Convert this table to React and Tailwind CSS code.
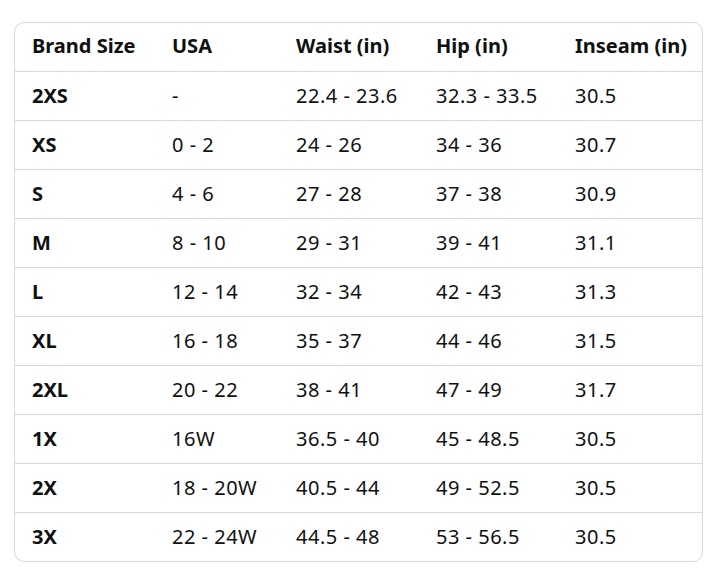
import React from 'react';

const headers = ['Brand Size', 'USA', 'Waist (in)', 'Hip (in)', 'Inseam (in)'];

const rows = [
    ['2XS', '-', '22.4 - 23.6', '32.3 - 33.5', '30.5'],
    ['XS', '0 - 2', '24 - 26', '34 - 36', '30.7'],
    ['S', '4 - 6', '27 - 28', '37 - 38', '30.9'],
    ['M', '8 - 10', '29 - 31', '39 - 41', '31.1'],
    ['L', '12 - 14', '32 - 34', '42 - 43', '31.3'],
    ['XL', '16 - 18', '35 - 37', '44 - 46', '31.5'],
    ['2XL', '20 - 22', '38 - 41', '47 - 49', '31.7'],
    ['1X', '16W', '36.5 - 40', '45 - 48.5', '30.5'],
    ['2X', '18 - 20W', '40.5 - 44', '49 - 52.5', '30.5'],
    ['3X', '22 - 24W', '44.5 - 48', '53 - 56.5', '30.5'],
];

const colWidths = ['w-[140px]', 'w-[124px]', 'w-[140px]', 'w-[139px]', 'w-[146px]'];

export default function App() {
    return (
        <div className="bg-white min-h-[570px] pt-[22px] pl-[14px] font-['Noto_Sans',sans-serif] text-[#0f1111]">
            <div className="w-[689px] border border-[#d5d9d9] rounded-[10px] overflow-hidden">
                <table className="w-full border-collapse table-fixed">
                    <thead>
                        <tr>
                            {headers.map((h, i) => (
                                <th key={h} className={`${colWidths[i]} h-[48px] pl-[17px] pb-px text-left font-bold text-[20px] leading-6 align-middle`}>
                                    {h}
                                </th>
                            ))}
                        </tr>
                    </thead>
                    <tbody>
                        {rows.map((r) => (
                            <tr key={r[0]} className="border-t border-[#d5d9d9]">
                                {r.map((c, i) => (
                                    <td key={i} className={`h-[49px] pl-[17px] text-[20px] leading-6 align-middle ${i === 0 ? 'font-bold' : 'tracking-[0.5px]'}`}>
                                        {c}
                                    </td>
                                ))}
                            </tr>
                        ))}
                    </tbody>
                </table>
            </div>
        </div>
    );
}
